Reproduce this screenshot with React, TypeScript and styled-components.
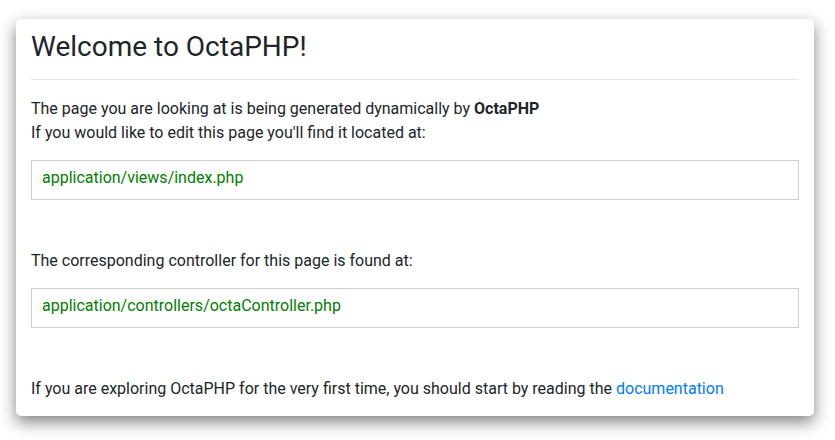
import React from "react";
import styled, { createGlobalStyle } from "styled-components";

const GlobalStyle = createGlobalStyle`
  html, body { margin: 0; padding: 0; background: #ffffff; }
  body {
    font-family: Roboto, "Liberation Sans", sans-serif;
    font-size: 16px;
    line-height: 24px;
    color: #212529;
  }
`;

const Page = styled.main`
  padding: 19px 21px 24px 16px;
`;

const Card = styled.section`
  background: #ffffff;
  border-radius: 5px;
  box-shadow: 0 6px 16px rgba(0, 0, 0, 0.5);
  padding: 11px 15px 15px 15px;
  display: flex;
  flex-direction: column;
`;

const Title = styled.h1`
  margin: 0;
  font-size: 28px;
  line-height: 34px;
  font-weight: 400;
  color: #212529;
`;

const Rule = styled.hr`
  margin: 15px 0 17px;
  border: 0;
  border-top: 1px solid rgba(0, 0, 0, 0.1);
  height: 0;
`;

const Paragraph = styled.p<{ $gap?: number }>`
  margin: 0 0 ${(p) => (p.$gap ?? 16)}px;
`;

const PathBox = styled.div<{ $gap?: number }>`
  border: 1px solid #cfcfcf;
  padding: 5px 10px 9px;
  color: #008000;
  margin-bottom: ${(p) => (p.$gap ?? 48)}px;
`;

const Link = styled.a`
  color: #007bff;
  text-decoration: none;
`;

export default function App() {
  return (
    <>
      <GlobalStyle />
      <Page>
        <Card>
          <Title>Welcome to OctaPHP!</Title>
          <Rule />
          <Paragraph $gap={15}>
            The page you are looking at is being generated dynamically by <strong>OctaPHP</strong>
            <br />
            If you would like to edit this page you'll find it located at:
          </Paragraph>
          <PathBox $gap={49}>application/views/index.php</PathBox>
          <Paragraph $gap={15}>The corresponding controller for this page is found at:</Paragraph>
          <PathBox $gap={49}>application/controllers/octaController.php</PathBox>
          <Paragraph $gap={0}>
            If you are exploring OctaPHP for the very first time, you should start by reading the{" "}
            <Link href="#">documentation</Link>
          </Paragraph>
        </Card>
      </Page>
    </>
  );
}
